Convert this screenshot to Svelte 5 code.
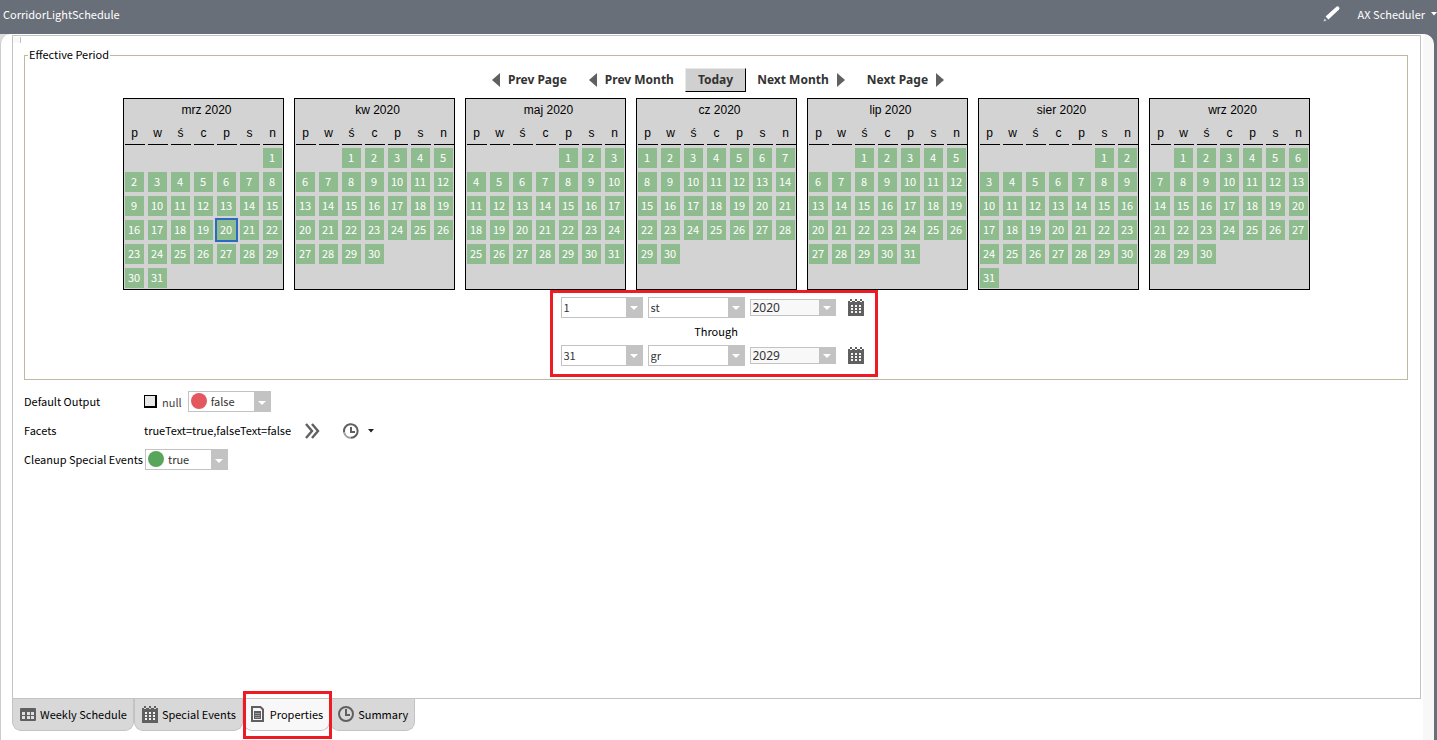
<script lang="ts">
  type Month = { name: string; offset: number; days: number };

  const months: Month[] = [
    { name: 'mrz 2020', offset: 6, days: 31 },
    { name: 'kw 2020', offset: 2, days: 30 },
    { name: 'maj 2020', offset: 4, days: 31 },
    { name: 'cz 2020', offset: 0, days: 30 },
    { name: 'lip 2020', offset: 2, days: 31 },
    { name: 'sier 2020', offset: 5, days: 31 },
    { name: 'wrz 2020', offset: 1, days: 30 },
  ];
  const weekdays = ['p', 'w', 'ś', 'c', 'p', 's', 'n'];
  const monthNames = ['st', 'lut', 'mrz', 'kw', 'maj', 'cz', 'lip', 'sier', 'wrz', 'paź', 'lis', 'gr'];
  const dayOptions = Array.from({ length: 31 }, (_, i) => String(i + 1));
  const yearOptions = Array.from({ length: 11 }, (_, i) => String(2020 + i));

  let selected = $state('mrz 2020-20');
  let from = $state({ day: '1', month: 'st', year: '2020' });
  let to = $state({ day: '31', month: 'gr', year: '2029' });
  let isNull = $state(false);
  let output = $state('false');
  let cleanup = $state('true');
  let activeTab = $state('Properties');

  const tabs = ['Weekly Schedule', 'Special Events', 'Properties', 'Summary'];

  function weeks(month: Month) {
    return Array.from({ length: 6 }, (_, w) =>
      Array.from({ length: 7 }, (_, d) => {
        const day = w * 7 + d - month.offset + 1;
        return day > 0 && day <= month.days ? day : 0;
      })
    );
  }
</script>

{#snippet calendarIcon()}
  <svg width="16" height="17" viewBox="0 0 16 17" aria-hidden="true">
    <path fill="#606060" d="M0 2h2v1h2V2h3v1h2V2h3v1h2V2h2v15H0z" />
    <path fill="#606060" d="M2 0h2v2H2zM7 0h2v2H7zM12 0h2v2h-2z" />
    <path fill="#f4f4f4" d="M3 6h2v2H3zM7 6h2v2H7zM11 6h2v2h-2zM3 9h2v2H3zM7 9h2v2H7zM11 9h2v2h-2zM3 12h2v2H3zM7 12h2v2H7zM11 12h2v2h-2z" />
  </svg>
{/snippet}

{#snippet arrow(dir: string)}
  <svg width="8" height="14" viewBox="0 0 8 14" aria-hidden="true">
    <path fill="#606060" d={dir === 'left' ? 'M8 0v14L0 7z' : 'M0 0v14l8-7z'} />
  </svg>
{/snippet}

{#snippet dateRow(value: { day: string; month: string; year: string }, label: string)}
  <div class="date-row">
    <span class="combo day">
      <select bind:value={value.day} aria-label="{label} day">
        {#each dayOptions as option}<option>{option}</option>{/each}
      </select>
    </span>
    <span class="combo month">
      <select bind:value={value.month} aria-label="{label} month">
        {#each monthNames as option}<option>{option}</option>{/each}
      </select>
    </span>
    <span class="combo year">
      <select bind:value={value.year} aria-label="{label} year">
        {#each yearOptions as option}<option>{option}</option>{/each}
      </select>
    </span>
    <button class="icon-button" aria-label="Pick {label} date">{@render calendarIcon()}</button>
  </div>
{/snippet}

<div class="app">
  <header>
    <h1>CorridorLightSchedule</h1>
    <div class="header-tools">
      <button class="icon-button" aria-label="Edit">
        <svg width="17" height="16" viewBox="0 0 17 16" aria-hidden="true">
          <path fill="#fff" d="M13.4.8q1.300-1 2.500.200 1.100 1.200.1 2.500L5.400 13.400 2.600 10.600z" />
          <path fill="#fff" d="M1.600 12.500l2 2L.5 15.600z" opacity=".7" />
        </svg>
      </button>
      <button class="view-menu">
        AX Scheduler
        <svg width="6" height="4" viewBox="0 0 6 4" aria-hidden="true"><path fill="#fff" d="M0 0h6L3 3.500z" /></svg>
      </button>
    </div>
  </header>

  <main>
    <div class="content">
      <section class="panel">
        <div class="strip"></div>
        <fieldset>
          <legend>Effective Period</legend>
          <div class="pager">
            <button>{@render arrow('left')}Prev Page</button>
            <button>{@render arrow('left')}Prev Month</button>
            <button class="today">Today</button>
            <button>Next Month{@render arrow('right')}</button>
            <button>Next Page{@render arrow('right')}</button>
          </div>

          <div class="calendars">
            {#each months as month}
              <table>
                <caption>{month.name}</caption>
                <thead>
                  <tr>
                    {#each weekdays as weekday}<th><span>{weekday}</span></th>{/each}
                  </tr>
                </thead>
                <tbody>
                  {#each weeks(month) as week}
                    <tr>
                      {#each week as day}
                        <td>
                          {#if day}
                            <button
                              class:selected={selected === `${month.name}-${day}`}
                              onclick={() => (selected = `${month.name}-${day}`)}>{day}</button>
                          {/if}
                        </td>
                      {/each}
                    </tr>
                  {/each}
                </tbody>
              </table>
            {/each}
          </div>

          <div class="range">
            {@render dateRow(from, 'start')}
            <p>Through</p>
            {@render dateRow(to, 'end')}
          </div>
        </fieldset>

        <div class="properties">
          <div class="property">
            <label class="name" for="output">Default Output</label>
            <label class="null"><input type="checkbox" bind:checked={isNull} />null</label>
            <span class="combo status">
              <i class="dot" class:on={output === 'true'}></i>
              <select id="output" bind:value={output}><option>false</option><option>true</option></select>
            </span>
          </div>
          <div class="property">
            <span class="name">Facets</span>
            <span class="facets">trueText=true,falseText=false</span>
            <button class="icon-button chevrons" aria-label="Edit facets">
              <svg width="15" height="16" viewBox="0 0 15 16" aria-hidden="true">
                <path fill="none" stroke="#606060" stroke-width="2.400" d="M1 1l6 7-6 7M7 1l6 7-6 7" />
              </svg>
            </button>
            <button class="icon-button history" aria-label="History">
              <svg width="16" height="16" viewBox="0 0 16 16" aria-hidden="true">
                <path fill="none" stroke="#606060" stroke-width="2" d="M1.200 9.500A6.800 6.800 0 1 1 8 14.800" />
                <path fill="none" stroke="#a0a0a0" stroke-width="2" d="M1.200 9.500A6.800 6.800 0 0 0 8 14.800" />
                <path fill="none" stroke="#606060" stroke-width="2" d="M8 4v5h4" />
              </svg>
              <svg width="6" height="4" viewBox="0 0 6 4" aria-hidden="true"><path fill="#222" d="M0 0h6L3 3.500z" /></svg>
            </button>
          </div>
          <div class="property">
            <label class="name" for="cleanup">Cleanup Special Events</label>
            <span class="combo status cleanup">
              <i class="dot" class:on={cleanup === 'true'}></i>
              <select id="cleanup" bind:value={cleanup}><option>true</option><option>false</option></select>
            </span>
          </div>
        </div>
      </section>

      <nav>
        {#each tabs as tab}
          <button
            class="tab"
            class:active={activeTab === tab}
            class:marked={tab === 'Properties'}
            onclick={() => (activeTab = tab)}>
            {#if tab === 'Weekly Schedule'}
              <svg width="16" height="16" viewBox="0 0 16 16" aria-hidden="true">
                <rect y="2" width="16" height="13" rx="1" fill="#606060" />
                <path fill="#dedede" d="M2 6h3v3H2zM7 6h3v3H7zM11 6h3v3h-3zM2 10h3v3H2zM7 10h3v3H7zM11 10h3v3h-3z" />
              </svg>
            {:else if tab === 'Special Events'}
              {@render calendarIcon()}
            {:else if tab === 'Properties'}
              <svg width="15" height="16" viewBox="0 0 15 16" aria-hidden="true">
                <path fill="none" stroke="#606060" stroke-width="2" d="M1 1h8.500L12 3.500V15H1z" />
                <path fill="#606060" d="M3 5h7v8H3z" />
                <path stroke="#999" d="M4 7.500h5M4 9.500h5M4 11.500h5" />
              </svg>
            {:else}
              <svg width="16" height="16" viewBox="0 0 16 16" aria-hidden="true">
                <circle cx="8" cy="8" r="7" fill="none" stroke="#606060" stroke-width="2" />
                <path fill="none" stroke="#606060" stroke-width="2" d="M8 3v6h4" />
              </svg>
            {/if}
            {tab}
          </button>
        {/each}
      </nav>
    </div>
  </main>
</div>

<style>
  :global(body) { margin: 0; }
  .app { display: flex; flex-direction: column; min-height: 100vh; color: #000; background: linear-gradient(to right, #ddd 50%, #696f79 50%); font: 11px/18px "Noto Sans CJK SC", "Noto Sans", sans-serif; }
  button, select, input { margin: 0; font: inherit; color: inherit; }
  button { padding: 0; border: 0; background: none; cursor: pointer; white-space: nowrap; }
  svg { display: block; flex: none; }

  header { display: flex; justify-content: space-between; height: 34px; padding: 6px 0 0 3px; box-sizing: border-box; color: #fff; background: #696f79; }
  h1 { margin: 0; font-size: 11px; font-weight: 400; line-height: 16px; }
  .header-tools { display: flex; align-items: flex-start; gap: 18px; }
  .view-menu { display: flex; align-items: center; gap: 6px; line-height: 16px; }

  main { display: flex; flex: 1; margin-right: 3px; border-left: 1px solid #ccc; border-right: 11px solid #f8f8f8; border-radius: 10px 10px 0 0; background: #fff; }
  .content { display: flex; flex: 1; flex-direction: column; padding: 1px 2px 9px 11px; }
  .panel { flex: 1; border: 1px solid #c3c3c3; padding-bottom: 16px; }
  .strip { width: 7px; height: 6px; margin-top: 1px; border-right: 1px solid #c3c3c3; background: #f8f8f8; }

  fieldset { display: flex; flex-direction: column; align-items: center; margin: 3px 12px 0 11px; padding: 4px 3px 12px; border: 1px solid #c0b99f; }
  legend { padding: 0 1px 2px; line-height: 16px; }

  .pager { display: flex; height: 24px; padding-left: 4px; }
  .pager button { display: flex; align-items: center; gap: 8px; padding: 0 10px; border: 1px solid transparent; color: #333; font-family: "Noto Sans", sans-serif; font-size: 12px; font-weight: 700; }
  .pager .today { padding: 0 12px; border-color: #e8e8e8 #000 #000 #e8e8e8; background: #d0d0d0; }

  .calendars { display: flex; gap: 10px; margin-top: 6px; }
  table { display: block; width: 161px; height: 192px; box-sizing: border-box; padding-left: 1px; border: 1px solid #000; border-spacing: 0; background: #d3d3d3; }
  caption { display: block; height: 24px; padding-left: 6px; font: 12px/23px "Liberation Sans", Arial, sans-serif; text-align: center; }
  th { width: 20px; height: 22px; padding: 0 3px 0 0; font: 12px/21px "Liberation Sans", Arial, sans-serif; }
  th span { display: block; border-bottom: 1px solid #000; }
  td { height: 20px; padding: 3px 4px 1px 0; }
  th:last-child, td:last-child { padding-right: 0; }
  td button { display: block; width: 19px; height: 20px; padding-bottom: 2px; color: #fff; background: #8fbc8f; line-height: 18px; text-align: center; }
  td button.selected { outline: 2px solid #2a6ac0; }

  .range { position: relative; margin-top: 5px; padding-right: 8px; }
  .range::after { content: ''; position: absolute; inset: -5px -6px -10px -11px; border: 3px solid #ed1c24; pointer-events: none; }
  .range p { margin: 0; padding-left: 8px; line-height: 25px; height: 24px; text-align: center; }
  .date-row { display: flex; align-items: center; gap: 5px; height: 24px; }
  .date-row .icon-button { margin-left: 7px; }

  .combo { position: relative; display: block; height: 21px; color: #333; }
  .combo::after { content: ''; position: absolute; top: 50%; right: 5px; border: 4px solid transparent; border-top-color: #fff; border-bottom: 0; margin-top: -1px; pointer-events: none; }
  select { display: block; width: 100%; height: 100%; box-sizing: border-box; padding: 0 0 1px 2px; border: 1px solid #c3c3c3; border-right-width: 17px; border-radius: 0; outline: 0; appearance: none; background: #fff; }
  .day { width: 82px; }
  .month { width: 97px; }
  .year { width: 86px; height: 17px; font-family: "Noto Sans", sans-serif; font-size: 12px; }
  .year select { padding-bottom: 0; background: #f8f8f8; line-height: 15px; }

  .properties { display: flex; flex-direction: column; gap: 8px; padding: 11px 11px 0; }
  .property { display: flex; align-items: center; height: 21px; }
  .name { min-width: 120px; padding-bottom: 2px; white-space: nowrap; }
  .facets { padding-bottom: 2px; }
  .null { display: flex; align-items: center; gap: 5px; margin-right: 6px; color: #444; }
  input { width: 13px; height: 13px; border: solid #000; border-width: 1px 2px 2px 1px; appearance: none; background: #e8e8e8; }
  input:checked { background: #606060; }
  .status { width: 83px; }
  .status select { padding-left: 22px; }
  .cleanup { margin-left: 1px; }
  .dot { position: absolute; top: 2px; left: 3px; width: 16px; height: 16px; border-radius: 50%; background: #e3585f; }
  .dot.on { background: #58a65c; }
  .chevrons { margin-left: 14px; }
  .history { display: flex; align-items: center; gap: 9px; margin-left: 23px; }

  nav { display: flex; }
  .tab { position: relative; display: flex; align-items: center; gap: 4px; height: 32px; padding: 0 6px 1px 7px; border: solid #c3c3c3; border-width: 0 1px 1px; border-radius: 0 0 9px 9px; background: #d8d8d8; }
  .tab.active { background: #f8f8f8; }
  .tab.marked::after { content: ''; position: absolute; inset: -8px -3px -9px -1px; border: 3px solid #ed1c24; z-index: 1; pointer-events: none; }
</style>
